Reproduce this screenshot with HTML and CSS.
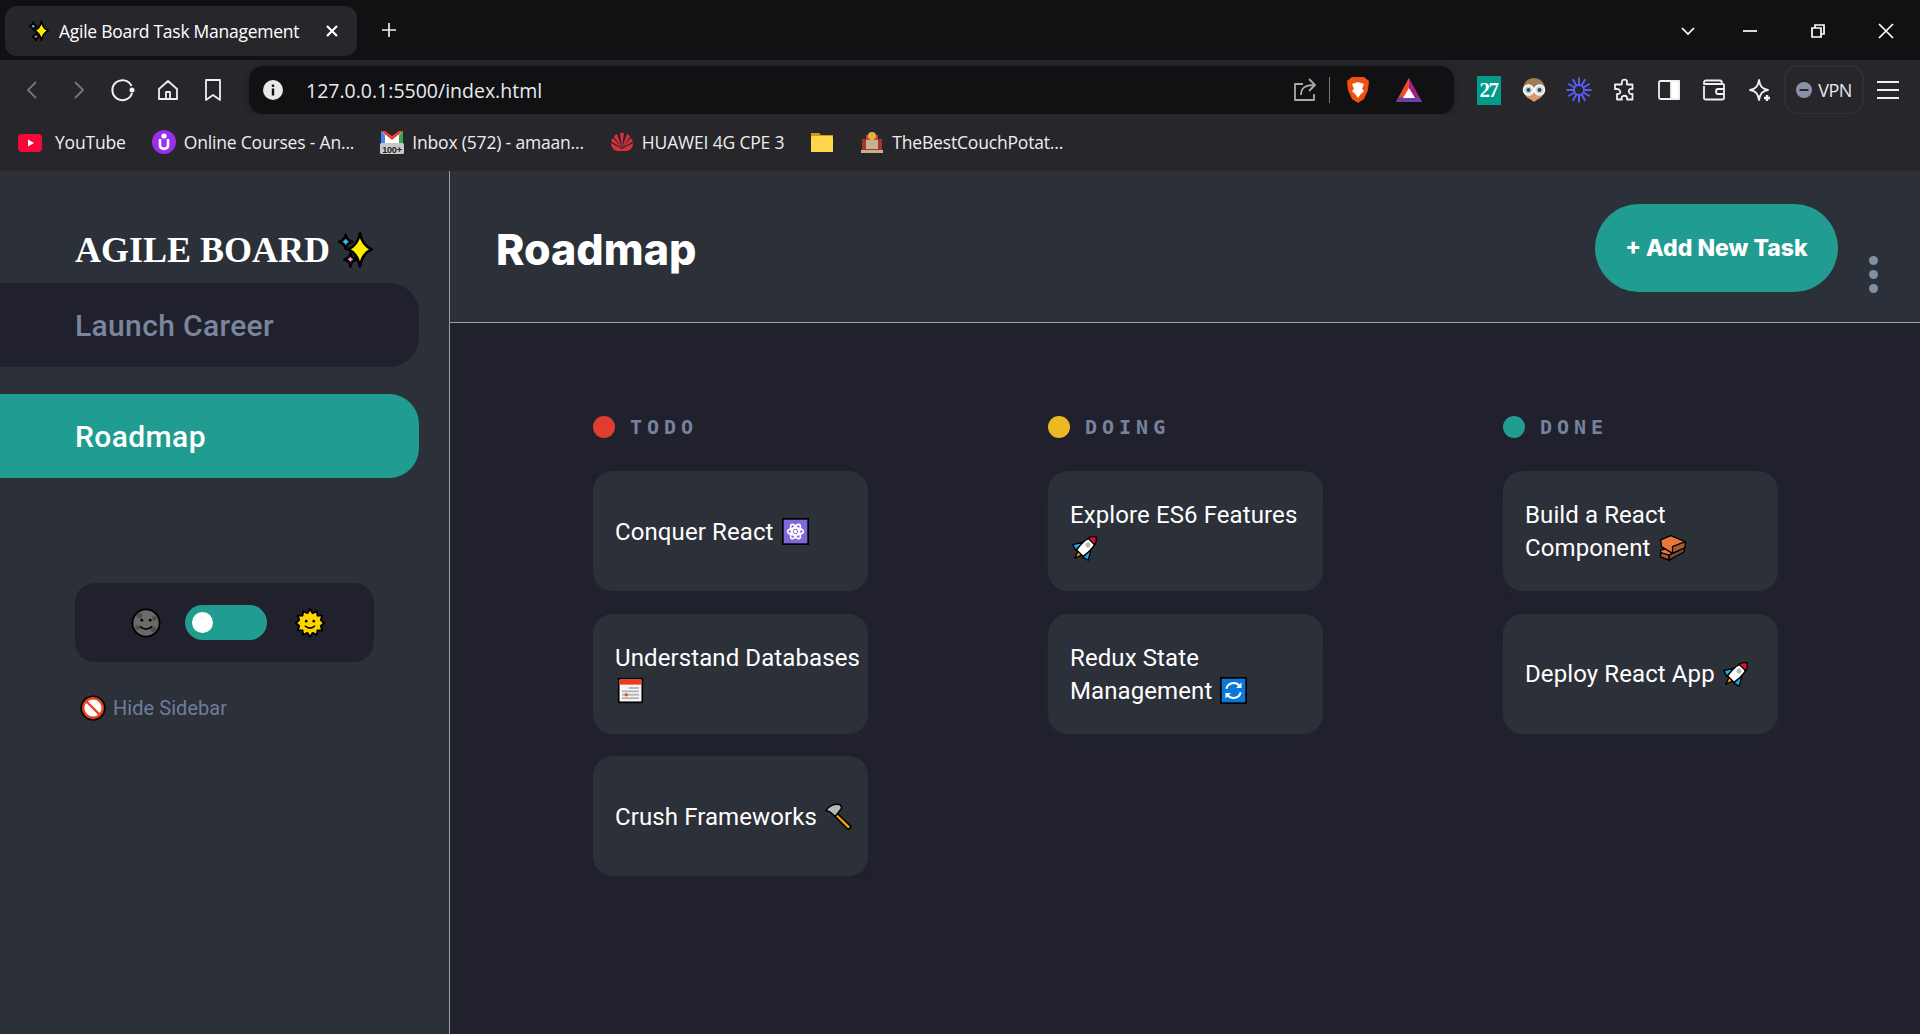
FILE: index.html
```html
<!DOCTYPE html>
<html lang="en">
<head>
<meta charset="utf-8">
<title>Agile Board Task Management</title>
<link rel="stylesheet" href="styles.css">
</head>
<body>
<svg class="defs" aria-hidden="true">
  <symbol id="sparkles" viewBox="0 0 32 32">
    <g stroke="#000" stroke-width="2.200" stroke-linejoin="round">
      <path fill="#ffee00" d="M21 2C22.500 10 26 13.500 31 15.500C26 17.500 22.500 21 21 30C19.500 21 16 17.500 11 15.500C16 13.500 19.500 10 21 2Z"/>
      <path fill="#35b8ea" d="M9 3C9.500 6.500 11 8 14.500 9C11 10 9.500 11.500 9 15C8.500 11.500 7 10 3.500 9C7 8 8.500 6.500 9 3Z"/>
      <path fill="#f08ab4" d="M13 19C13.500 22 15 23 18 24C15 25 13.500 26 13 30C12.500 26 11 25 8 24C11 23 12.500 22 13 19Z"/>
    </g>
  </symbol>
  <symbol id="rocket" viewBox="0 0 32 32">
    <g transform="translate(16 16) rotate(45) scale(1.180) translate(-16 -16)" stroke="#000" stroke-width="1.400" stroke-linejoin="round">
      <path fill="#ff9800" d="M13 23L16 31L19 23Z"/>
      <path fill="#18a8e8" d="M11 13L5 23L11 25Z"/>
      <path fill="#18a8e8" d="M21 13L27 23L21 25Z"/>
      <path fill="#fff" d="M16 1C21 5 22.500 13 20.500 24H11.500C9.500 13 11 5 16 1Z"/>
      <path fill="#e0102a" d="M16 1C18.500 2.500 20 4.500 20.800 7.500H11.200C12 4.500 13.500 2.500 16 1Z"/>
      <circle cx="16" cy="12.500" r="2.600" fill="#b8b8b8" stroke="none"/>
    </g>
  </symbol>
  <symbol id="atom" viewBox="0 0 32 32">
    <rect x="1" y="1" width="30" height="30" fill="#7f68d8" stroke="#000" stroke-width="2"/>
    <g fill="none" stroke="#fff" stroke-width="2">
      <ellipse cx="16" cy="16" rx="9.500" ry="4"/>
      <ellipse cx="16" cy="16" rx="9.500" ry="4" transform="rotate(60 16 16)"/>
      <ellipse cx="16" cy="16" rx="9.500" ry="4" transform="rotate(120 16 16)"/>
    </g>
    <circle cx="16" cy="16" r="2" fill="#fff"/>
  </symbol>
  <symbol id="calendar" viewBox="0 0 32 32">
    <rect x="2" y="2" width="28" height="28" fill="#f4f4f4" stroke="#000" stroke-width="2"/>
    <rect x="3" y="3" width="26" height="6" fill="#f03a17"/>
    <g fill="#b0b0b0">
      <rect x="14" y="12" width="12" height="2"/><rect x="6" y="16" width="20" height="2"/>
      <rect x="6" y="20" width="20" height="2"/><rect x="6" y="24" width="20" height="2"/>
    </g>
    <circle cx="11" cy="21" r="2" fill="#e8503a"/>
  </symbol>
  <symbol id="hammer" viewBox="0 0 32 32">
    <path d="M13 11L31 28L27.500 31.500L10 14Z" fill="#f0a800" stroke="#000" stroke-width="1.800" stroke-linejoin="round"/>
    <path d="M1 9C5 3 12 0 18 2L20 6L12 16L9 13C7 11 5 9.500 1 9Z" fill="#b8b8b8" stroke="#000" stroke-width="1.800" stroke-linejoin="round"/>
  </symbol>
  <symbol id="bricks" viewBox="0 0 32 32">
    <g stroke="#000" stroke-width="1.600" stroke-linejoin="round">
      <path d="M2 19L14 16L20 19V26L12 31L2 27Z" fill="#e8773a"/>
      <path d="M2 22L12 25V31L2 27Z" fill="#a85a38"/>
      <path d="M12 25L30 15V21L12 31Z" fill="#7a4a36"/>
      <path d="M2 7L14 2L31 9V16L16 23L3 15Z" fill="#e8773a"/>
      <path d="M16 15L31 9V16L16 23Z" fill="#a85a38"/>
    </g>
  </symbol>
  <symbol id="refresh" viewBox="0 0 32 32">
    <rect x="1" y="1" width="30" height="30" fill="#0a78d8" stroke="#000" stroke-width="2"/>
    <g fill="none" stroke="#fff" stroke-width="2.400">
      <path d="M7.500 14A8.800 8.800 0 0 1 23 10.500"/>
      <path d="M24.500 18A8.800 8.800 0 0 1 9 21.500"/>
    </g>
    <path d="M25.500 6.500V13H19Z M6.500 25.500V19H13Z" fill="#fff"/>
  </symbol>
  <symbol id="moon" viewBox="0 0 32 32">
    <circle cx="16" cy="16" r="14.500" fill="#6a6a6a" stroke="#000" stroke-width="2"/>
    <g fill="#4e4e4e"><circle cx="9" cy="8" r="3"/><circle cx="25" cy="11" r="2.500"/><circle cx="24" cy="23" r="3"/><circle cx="7" cy="21" r="2.500"/></g>
    <circle cx="11.500" cy="13" r="1.500"/><circle cx="20.500" cy="13" r="1.500"/>
    <path d="M9.500 19.500Q16 25.500 22.500 19.500" fill="none" stroke="#000" stroke-width="1.800"/>
  </symbol>
  <symbol id="sun" viewBox="0 0 32 32">
    <path d="M16 1L18.800 5.500L23.300 3.400L24 8.200L29 8.100L27.500 12.800L31 16L27.500 19.200L29 23.900L24 23.800L23.300 28.600L18.800 26.500L16 31L13.200 26.500L8.700 28.600L8 23.800L3 23.900L4.500 19.200L1 16L4.500 12.800L3 8.100L8 8.200L8.700 3.400L13.200 5.500Z" fill="#ffd500" stroke="#000" stroke-width="2" stroke-linejoin="round"/>
    <circle cx="12" cy="14" r="1.400"/><circle cx="20" cy="14" r="1.400"/>
    <path d="M10.500 19Q16 24 21.500 19" fill="none" stroke="#000" stroke-width="1.600"/>
  </symbol>
  <symbol id="prohibit" viewBox="0 0 32 32">
    <circle cx="16" cy="16" r="15.500" fill="#000"/>
    <circle cx="16" cy="16" r="12" fill="#fff" stroke="#e8401c" stroke-width="3"/>
    <path d="M8 8L24 24" stroke="#e8401c" stroke-width="3"/>
  </symbol>
</svg>

<header class="tabstrip">
  <div class="tab">
    <svg class="tab-fav"><use href="#sparkles"/></svg>
    <span class="tab-title">Agile Board Task Management</span>
    <svg class="tab-close" viewBox="0 0 14 14"><path d="M2 2L12 12M12 2L2 12"/></svg>
  </div>
  <svg class="tab-new" viewBox="0 0 18 18"><path d="M9 2V16M2 9H16"/></svg>
  <div class="win-ctrls">
    <svg class="win win-chevron" viewBox="0 0 18 18"><path d="M3 6L9 12L15 6"/></svg>
    <svg class="win" viewBox="0 0 18 18"><path d="M2 9H16"/></svg>
    <svg class="win" viewBox="0 0 18 18"><path d="M3 6H12V15H3Z M6 6V3H15V12H12"/></svg>
    <svg class="win" viewBox="0 0 18 18"><path d="M2 2L16 16M16 2L2 16"/></svg>
  </div>
</header>

<nav class="toolbar">
  <div class="tb-btn"><svg class="ic dim" viewBox="0 0 24 24"><path d="M15 4L7 12L15 20"/></svg></div>
  <div class="tb-btn"><svg class="ic dim" viewBox="0 0 24 24"><path d="M9 4L17 12L9 20"/></svg></div>
  <div class="tb-btn"><svg class="ic reload" viewBox="0 0 24 24"><path d="M20.500 8A10 10 0 1 0 21 15"/><circle cx="21" cy="12" r="1.500" fill="#fff"/></svg></div>
  <div class="tb-btn"><svg class="ic" viewBox="0 0 24 24"><path d="M3 11L12 3L21 11V21H3Z M10 21V14H14V21"/></svg></div>
  <div class="tb-btn"><svg class="ic" viewBox="0 0 24 24"><path d="M5 2H19V22L12 17L5 22Z"/></svg></div>
  <div class="omnibox">
    <svg class="info" viewBox="0 0 20 20"><circle cx="10" cy="10" r="10" fill="#e8e8ea"/><rect x="8.800" y="8.500" width="2.400" height="7" fill="#111"/><rect x="8.800" y="4.500" width="2.400" height="2.400" fill="#111"/></svg>
    <span class="url">127.0.0.1:5500/index.html</span>
    <svg class="ic share" viewBox="0 0 24 24"><path d="M10 6H2V22H21V16 M8 17C8 10 12 7 21 7 M16 1L22 7L16 13"/></svg>
    <span class="omni-sep"></span>
    <svg class="brave" viewBox="0 0 24 28"><path d="M6 1H18L23 5L22 14L18 23L12 27L6 23L2 14L1 5Z" fill="#f1500f"/><path d="M6 8L12 6L18 8L16 13L18 15L14 19L12 22L10 19L6 15L8 13Z" fill="#fff"/></svg>
    <svg class="bat" viewBox="0 0 28 26"><path d="M14 1L27 25H1Z" fill="#a3208a"/><path d="M14 1L1 25H8L14 13Z" fill="#f24e24"/><path d="M1 25H27L24 20H4Z" fill="#6f3fa0"/><path d="M14 11L20 21H8Z" fill="#fff"/></svg>
  </div>
  <div class="tb-right">
    <div class="tb-btn"><span class="ext-27">27</span></div>
    <div class="tb-btn"><svg class="ext" viewBox="0 0 26 26"><circle cx="13" cy="12" r="11" fill="#a07c58"/><path d="M5 14H21V19L13 25L5 19Z" fill="#d99a70"/><circle cx="7.500" cy="13" r="5" fill="#c8dde0" stroke="#fff" stroke-width="1.500"/><circle cx="18.500" cy="13" r="5" fill="#c8dde0" stroke="#fff" stroke-width="1.500"/><circle cx="7.500" cy="13" r="2" fill="#345"/><circle cx="18.500" cy="13" r="2" fill="#345"/></svg></div>
    <div class="tb-btn"><svg class="ext star" viewBox="0 0 26 26"><circle cx="13" cy="13" r="5"/><path d="M13 .5V8M19.250 2.200L15.500 8.700M23.800 6.750L17.300 10.500M25.500 13H18M23.800 19.250L17.300 15.500M19.250 23.800L15.500 17.300M13 25.500V18M6.750 23.800L10.500 17.300M2.200 19.250L8.700 15.500M.5 13H8M2.200 6.750L8.700 10.500M6.750 2.200L10.500 8.700"/></svg></div>
    <div class="tb-btn"><svg class="ic" viewBox="0 0 24 24"><path d="M10 3.500C10 1 15 1 15 3.500C15 5 14.500 5.500 15 6.500H20.500V11C19 11 18.500 10.500 17.500 11.500C16 13 17 16.500 19.500 16C20 16 20.500 15.800 20.500 16V21.500H15C15 20 15.500 19.500 14.500 18.500C13 17 9.500 18 9.500 20C9.500 20.800 10 21 10 21.500H5V16C6 16 7 16.500 8 15C9 13.500 7.500 11 5 11H3V6.500H9.500C10 5.500 10 4.500 10 3.500Z"/></svg></div>
    <div class="tb-btn"><svg class="ic" viewBox="0 0 24 24"><rect x="2" y="3" width="20" height="18" rx="1.500"/><rect x="14" y="3" width="8" height="18" fill="#fff"/></svg></div>
    <div class="tb-btn"><svg class="ic" viewBox="0 0 24 24"><path d="M2 8V20C2 21 3 21.500 4 21.500H20C21 21.500 22 21 22 20V7C22 6.500 21.500 6 20 6H2V4.500C2 3 3 2.500 4 2.500H18C19.500 2.500 20 3.500 20 6 M22 11H16C14.500 11 14 12 14 13.500C14 15 14.500 16 16 16H22"/></svg></div>
    <div class="tb-btn"><svg class="ic" viewBox="0 0 24 24"><path d="M12 2C13 8 15 11 21 12C15 13 13 16 12 22C11 16 9 13 3 12C9 11 11 8 12 2Z"/><path d="M20 17V23M17 20H23" stroke-width="2.400"/></svg></div>
  </div>
  <div class="vpn">
    <svg class="vpn-ic" viewBox="0 0 16 16"><circle cx="8" cy="8" r="8" fill="#8c91aa"/><rect x="3.500" y="7" width="9" height="2" fill="#26262b"/></svg>
    <span>VPN</span>
  </div>
  <svg class="ic menu" viewBox="0 0 24 24"><path d="M1 4H23M1 12H23M1 20H23"/></svg>
</nav>

<nav class="bookmarks">
  <a class="bm bm-yt"><svg class="fav" viewBox="0 0 24 24"><rect x="0" y="4" width="24" height="18" rx="4" fill="#f8083a"/><path d="M10 9.500L16 13L10 16.500Z" fill="#fff"/></svg>YouTube</a>
  <a class="bm"><svg class="fav" viewBox="0 0 24 24"><circle cx="12" cy="12" r="12" fill="#9b30e8"/><path d="M8 9V15.500C8 20 16 20 16 15.500V9" fill="none" stroke="#fff" stroke-width="2.600"/><circle cx="12" cy="6" r="2.600" fill="#fff"/></svg>Online Courses - An...</a>
  <a class="bm"><svg class="fav" viewBox="0 0 24 24"><path d="M1 1L12 9L23 1V14H1Z" fill="#fff"/><path d="M1 1V14H5V5Z" fill="#4285f4"/><path d="M23 1V14H19V5Z" fill="#34a853"/><path d="M1 1L12 10L23 1L19 1L12 6L5 1Z" fill="#ea4335"/><rect x="0" y="13" width="24" height="11" rx="1.500" fill="#c9c9c9"/><text x="12" y="23" class="fav-count">100+</text></svg>Inbox (572) - amaan...</a>
  <a class="bm"><svg class="fav" viewBox="0 0 24 24"><g fill="#d8303c"><path d="M12 19L1 13C1 17 3 20 7 21H12Z"/><path d="M12 19L23 13C23 17 21 20 17 21H12Z"/><path d="M12 18L3 8C1 11 1 12 2 12Z"/><path d="M12 18L21 8C23 11 23 12 22 12Z"/><path d="M12 18L7 4C5 5 4 6 4 7Z"/><path d="M12 18L17 4C19 5 20 6 20 7Z"/><path d="M12 18L10 3H14Z"/></g></svg>HUAWEI 4G CPE 3</a>
  <a class="bm"><svg class="fav" viewBox="0 0 24 24"><path d="M1 3H9L11 5H23V22H1Z" fill="#d39b0a"/><rect x="1" y="6" width="22" height="16" rx="1.500" fill="#ffd54d"/></svg></a>
  <a class="bm"><svg class="fav" viewBox="0 0 24 24"><rect x="2" y="9" width="20" height="11" fill="#a8352a"/><rect x="6" y="5" width="12" height="12" fill="#c0463a"/><circle cx="12" cy="6" r="4" fill="#e8b040"/><rect x="6" y="10" width="12" height="9" fill="#c8b090"/><rect x="1" y="20" width="22" height="3" fill="#c8b090"/></svg>TheBestCouchPotat...</a>
</nav>

<div class="app">
  <aside class="sidebar">
    <h1 class="brand">AGILE BOARD <svg class="brand-ic"><use href="#sparkles"/></svg></h1>
    <a class="side-item">Launch Career</a>
    <a class="side-item active">Roadmap</a>
    <div class="theme">
      <svg class="theme-ic"><use href="#moon"/></svg>
      <span class="switch"><span class="knob"></span></span>
      <svg class="theme-ic"><use href="#sun"/></svg>
    </div>
    <a class="hide"><svg class="hide-ic"><use href="#prohibit"/></svg>Hide Sidebar</a>
  </aside>

  <main class="main">
    <div class="topbar">
      <h2 class="page-title">Roadmap</h2>
      <button class="add">+ Add New Task</button>
      <div class="dots"><span></span><span></span><span></span></div>
    </div>
    <section class="board">
      <div class="col">
        <h3 class="col-head"><span class="dot red"></span><span>TODO</span></h3>
        <article class="card"><p class="card-text">Conquer React <svg class="emo"><use href="#atom"/></svg></p></article>
        <article class="card"><p class="card-text">Understand Databases <svg class="emo"><use href="#calendar"/></svg></p></article>
        <article class="card"><p class="card-text">Crush Frameworks <svg class="emo"><use href="#hammer"/></svg></p></article>
      </div>
      <div class="col">
        <h3 class="col-head"><span class="dot yellow"></span><span>DOING</span></h3>
        <article class="card"><p class="card-text">Explore ES6 Features <svg class="emo"><use href="#rocket"/></svg></p></article>
        <article class="card"><p class="card-text">Redux State Management <svg class="emo"><use href="#refresh"/></svg></p></article>
      </div>
      <div class="col">
        <h3 class="col-head"><span class="dot teal"></span><span>DONE</span></h3>
        <article class="card"><p class="card-text">Build a React Component <svg class="emo"><use href="#bricks"/></svg></p></article>
        <article class="card"><p class="card-text">Deploy React App <svg class="emo"><use href="#rocket"/></svg></p></article>
      </div>
    </section>
  </main>
</div>
</body>
</html>
```

FILE: styles.css
```css
* { box-sizing: border-box; }
html, body { margin: 0; height: 100%; }
body {
  width: 1920px;
  height: 1034px;
  overflow: hidden;
  display: flex;
  flex-direction: column;
  background: #21212d;
  color: #fff;
  font-family: "Roboto", "Liberation Sans", sans-serif;
}
.defs { position: absolute; width: 0; height: 0; }
svg { display: block; flex: none; }

/* Browser chrome */
.tabstrip {
  height: 60px;
  flex: none;
  display: flex;
  align-items: flex-start;
  background: #111114;
  padding: 6px 0 0 5px;
}
.tab {
  width: 352px;
  height: 50px;
  display: flex;
  align-items: center;
  background: #26262b;
  border-radius: 12px;
  padding: 0 18px 0 22px;
}
.tab-fav { width: 22px; height: 22px; margin-right: 10px; }
.tab-title {
  flex: 1;
  font: 17.500px "Open Sans", sans-serif;
  letter-spacing: -0.27px;
  white-space: nowrap;
}
.tab-close { width: 14px; height: 14px; fill: none; stroke: #fff; stroke-width: 2.200; }
.tab-new { width: 18px; height: 18px; margin: 15px 0 0 23px; fill: none; stroke: #eee; stroke-width: 1.700; }
.win-ctrls { margin-left: auto; display: flex; padding: 16px 25px 0 0; gap: 50px; }
.win { width: 18px; height: 18px; fill: none; stroke: #fff; stroke-width: 1.700; }
.win-chevron { margin-right: -6px; }

.toolbar {
  height: 54px;
  flex: none;
  display: flex;
  align-items: flex-start;
  background: #26262b;
  padding: 6px 0 0 10px;
}
.tb-btn { width: 45px; height: 48px; display: flex; align-items: center; justify-content: center; }
.ic { width: 24px; height: 24px; fill: none; stroke: #f0f0f0; stroke-width: 1.800; stroke-linejoin: round; }
.ic.dim { stroke: #75757c; }
.ic.reload { stroke-width: 2; }
.omnibox {
  width: 1205px;
  height: 48px;
  margin-left: 14px;
  display: flex;
  align-items: center;
  background: #111114;
  border-radius: 14px;
  padding: 0 31px 0 14px;
  box-shadow: 0 2px 6px rgba(0,0,0,.25);
}
.info { width: 20px; height: 20px; margin-right: 23px; }
.url { flex: 1; font: 19.500px "Open Sans", sans-serif; color: #e8eaf0; }
.share { stroke: #aaa; }
.omni-sep { width: 1px; height: 26px; background: #777; margin: 0 16px 0 12px; }
.brave { width: 24px; height: 28px; margin-right: 25px; }
.bat { width: 28px; height: 26px; }
.tb-right { display: flex; margin-left: 12px; }
.ext { width: 26px; height: 26px; }
.ext-27 {
  width: 24px;
  height: 29px;
  display: flex;
  align-items: center;
  justify-content: center;
  background: #009b8a;
  color: #fff;
  font: 700 21px "Liberation Serif", serif;
  letter-spacing: -1.500px;
}
.star { fill: none; stroke: #5a5cf0; stroke-width: 2; }
.vpn {
  width: 80px;
  height: 50px;
  margin: -1px 0 0 3px;
  display: flex;
  align-items: center;
  justify-content: center;
  gap: 6px;
  border: 2px solid #2f2f36;
  border-radius: 14px;
  font: 18px "Open Sans", sans-serif;
  letter-spacing: -0.5px;
  color: #e8e8ea;
}
.vpn-ic { width: 16px; height: 16px; }
.menu { margin: 12px 0 0 12px; stroke-width: 1.800; }

.bookmarks {
  height: 57px;
  flex: none;
  display: flex;
  align-items: center;
  background: #26262b;
  padding: 0 0 2px 18px;
  gap: 26px;
  font: 17.500px "Open Sans", sans-serif;
  letter-spacing: -0.18px;
  color: #eee;
}
.bm { display: flex; align-items: center; gap: 8px; white-space: nowrap; }
.bm-yt { gap: 13px; }
.fav { width: 24px; height: 24px; }
.fav-count { font: 700 9px "Liberation Sans", sans-serif; text-anchor: middle; fill: #222; }

/* App */
.app { flex: 1; display: flex; min-height: 0; }
.sidebar {
  width: 450px;
  flex: none;
  background: #2c3038;
  border-right: 1px solid #9a9a9a;
  padding-top: 56px;
}
.brand {
  height: 56px;
  margin: 0;
  padding: 0 0 10px 75px;
  display: flex;
  align-items: center;
  gap: 5px;
  font: 700 36px "Liberation Serif", serif;
  white-space: nowrap;
}
.brand-ic { width: 38px; height: 38px; }
.side-item {
  width: 419px;
  height: 84px;
  display: flex;
  align-items: center;
  padding-left: 75px;
  background: #21212d;
  border-radius: 0 30px 30px 0;
  font-size: 30px;
  font-weight: 500;
  letter-spacing: 0.35px;
  color: #7a869d;
}
.side-item.active { margin-top: 27px; background: #219c90; color: #fff; letter-spacing: 0.4px; }
.theme {
  width: 299px;
  height: 79px;
  margin: 105px 0 0 75px;
  padding-left: 56px;
  display: flex;
  align-items: center;
  background: #21212d;
  border-radius: 20px;
}
.theme-ic { width: 30px; height: 30px; }
.switch {
  width: 82px;
  height: 35px;
  margin: 0 28px 0 24px;
  display: flex;
  align-items: center;
  padding-left: 7px;
  background: #219c90;
  border-radius: 18px;
}
.knob { width: 21px; height: 21px; border-radius: 50%; background: #fff; }
.hide {
  margin: 33px 0 0 80px;
  display: flex;
  align-items: center;
  gap: 7px;
  font-size: 20px;
  letter-spacing: 0.05px;
  color: #6d7d9c;
}
.hide-ic { width: 26px; height: 26px; }

.main { flex: 1; min-width: 0; display: flex; flex-direction: column; }
.topbar {
  height: 152px;
  flex: none;
  display: flex;
  align-items: center;
  padding: 0 42px 0 46px;
  background: #2c3038;
  border-bottom: 1px solid #a0a0a0;
}
.page-title { flex: 1; margin: 5px 0 0; font: 800 43px "Inter", sans-serif; }
.add {
  width: 243px;
  height: 88px;
  margin-top: 2px;
  border: 0;
  border-radius: 44px;
  background: #219c90;
  color: #fff;
  font: 800 23px "Inter", sans-serif;
}
.dots { display: flex; flex-direction: column; gap: 5px; margin: 56px 0 0 31px; }
.dots span { width: 9px; height: 9px; border-radius: 50%; background: #828fa3; }

.board {
  display: grid;
  grid-template-columns: repeat(3, 275px);
  column-gap: 180px;
  align-items: start;
  padding: 93px 0 0 143px;
}
.col { display: flex; flex-direction: column; gap: 22.500px; }
.col-head {
  height: 22px;
  margin: 0 0 10.500px;
  display: flex;
  align-items: center;
  gap: 15px;
  font: 700 20px "DejaVu Sans Mono", monospace;
  letter-spacing: 5px;
  color: #76839c;
}
.dot { width: 22px; height: 22px; border-radius: 50%; }
.red { background: #e03c31; }
.yellow { background: #ecb824; }
.teal { background: #219c90; }
.card {
  width: 275px;
  height: 120px;
  display: flex;
  align-items: center;
  padding: 2px 4px 0 22px;
  background: #2c3038;
  border-radius: 20px;
  box-shadow: 0 4px 12px rgba(54,78,126,.06);
}
.card-text {
  margin: 0;
  font-size: 24px;
  line-height: 33px;
  letter-spacing: 0.1px;
}
.emo { display: inline-block; width: 27px; height: 27px; margin-left: 2px; vertical-align: -5px; }
```
